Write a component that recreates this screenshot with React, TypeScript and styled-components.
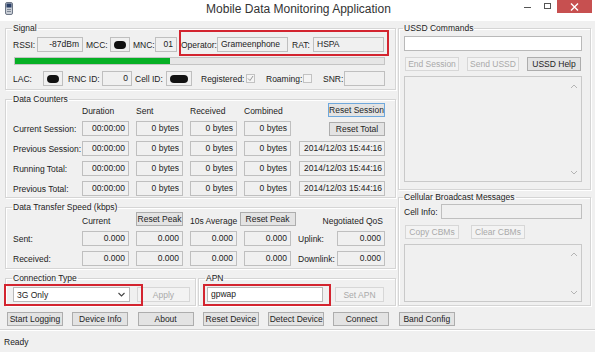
import React from "react";
import styled, { createGlobalStyle } from "styled-components";

const GlobalStyle = createGlobalStyle`
  html, body {
    margin: 0;
    padding: 0;
    background: #fff;
  }
  body {
    font-family: "Liberation Sans", Arial, sans-serif;
    font-size: 8.5px;
    color: #222;
  }
  * {
    box-sizing: border-box;
  }
`;

const signalStrength = 42;

const counterRows = [
  { label: "Current Session:", stamp: null },
  { label: "Previous Session:", stamp: "2014/12/03 15:44:16" },
  { label: "Running Total:", stamp: "2014/12/03 15:44:16" },
  { label: "Previous Total:", stamp: "2014/12/03 15:44:16" },
];

const bottomButtons = [
  "Start Logging",
  "Device Info",
  "About",
  "Reset Device",
  "Detect Device",
  "Connect",
  "Band Config",
];

const Chevron = ({ up }: { up?: boolean }) => (
  <svg width="8" height="5" viewBox="0 0 8 5">
    <polyline
      points={up ? "1,4 4,1 7,4" : "1,1 4,4 7,1"}
      fill="none"
      stroke="#b4b4b4"
      strokeWidth="1"
    />
  </svg>
);

const AppIcon = () => (
  <svg width="8" height="13" viewBox="0 0 8 13">
    <rect x="0.5" y="0.5" width="7" height="12" rx="1.5" fill="#c9ced6" stroke="#6d7786" />
    <rect x="1.5" y="1.5" width="5" height="4" fill="#2a3f66" />
    <rect x="2" y="7" width="4" height="1" fill="#7f8896" />
    <rect x="2" y="9" width="4" height="1" fill="#7f8896" />
  </svg>
);

export default function App() {
  return (
    <>
      <GlobalStyle />
      <Window>
        <TitleBar>
          <IconSlot>
            <AppIcon />
          </IconSlot>
          <Title>Mobile Data Monitoring Application</Title>
          <Controls>
            <MinButton>
              <span />
            </MinButton>
            <MaxButton>
              <span />
            </MaxButton>
            <CloseButton>
              <svg width="9" height="8" viewBox="0 0 9 8">
                <path d="M1 0.5 L8 7.5 M8 0.5 L1 7.5" stroke="#fff" strokeWidth="1.4" />
              </svg>
            </CloseButton>
          </Controls>
        </TitleBar>

        <Body>
          <LeftColumn>
            <Group $h={67} $pt={4}>
              <Legend>Signal</Legend>
              <Row>
                <Label $w={24}>RSSI:</Label>
                <Box $w={46}>-87dBm</Box>
                <Label $w={24} $ml={3}>MCC:</Label>
                <Box $w={20}>
                  <Blob />
                </Box>
                <Label $w={22} $ml={3}>MNC:</Label>
                <Box $w={22}>01</Box>
                <Highlight $t={7} $r={5} $b={4} $l={2} $ml={4}>
                  <Label $w={36}>Operator:</Label>
                  <Box $w={71} $align="left">Grameenphone</Box>
                  <Label $w={21} $ml={4}>RAT:</Label>
                  <Box $w={71} $align="left">HSPA</Box>
                </Highlight>
              </Row>
              <Progress>
                <ProgressFill style={{ width: `${signalStrength}%` }} />
              </Progress>
              <Row>
                <Label $w={30}>LAC:</Label>
                <Box $w={20}>
                  <Blob />
                </Box>
                <Label $w={34} $ml={5}>RNC ID:</Label>
                <Box $w={30}>0</Box>
                <Label $w={31} $ml={3}>Cell ID:</Label>
                <Box $w={26}>
                  <Blob />
                </Box>
                <Label $w={45} $ml={9}>Registered:</Label>
                <Check>
                  <svg width="7" height="7" viewBox="0 0 7 7">
                    <polyline points="1,3.5 3,5.5 6,1" fill="none" stroke="#9a9a9a" strokeWidth="1" />
                  </svg>
                </Check>
                <Label $w={37} $ml={11}>Roaming:</Label>
                <Check />
                <Label $w={21} $ml={11}>SNR:</Label>
                <Box $w={41} />
              </Row>
            </Group>

            <Group $h={104} $pt={0}>
              <Legend>Data Counters</Legend>
              <CounterGrid>
                <span />
                <Header>Duration</Header>
                <Header>Sent</Header>
                <Header>Received</Header>
                <Header>Combined</Header>
                <Button $w={57} $focused $end>
                  Reset Session
                </Button>
                {counterRows.map((row) => (
                  <React.Fragment key={row.label}>
                    <RowLabel>{row.label}</RowLabel>
                    <Box $w={47}>00:00:00</Box>
                    <Box $w={47}>0 bytes</Box>
                    <Box $w={47}>0 bytes</Box>
                    <Box $w={47}>0 bytes</Box>
                    {row.stamp ? (
                      <Stamp $w={86}>{row.stamp}</Stamp>
                    ) : (
                      <Button $w={56} $end>
                        Reset Total
                      </Button>
                    )}
                  </React.Fragment>
                ))}
              </CounterGrid>
            </Group>

            <Group $h={67} $pt={0}>
              <Legend>Data Transfer Speed (kbps)</Legend>
              <SpeedGrid>
                <span />
                <Header>Current</Header>
                <Button $w={47}>Reset Peak</Button>
                <Header>10s Average</Header>
                <Button $w={56} $center>
                  Reset Peak
                </Button>
                <Header $right>Negotiated QoS</Header>
                {[
                  ["Sent:", "Uplink:"],
                  ["Received:", "Downlink:"],
                ].map(([label, qos]) => (
                  <React.Fragment key={label}>
                    <RowLabel>{label}</RowLabel>
                    <Box $w={47}>0.000</Box>
                    <Box $w={47}>0.000</Box>
                    <Box $w={47}>0.000</Box>
                    <Box $w={47}>0.000</Box>
                    <QosCell>
                      <RowLabel>{qos}</RowLabel>
                      <Box $w={48}>0.000</Box>
                    </QosCell>
                  </React.Fragment>
                ))}
              </SpeedGrid>
            </Group>

            <BottomGroups>
              <Group $h={33} $pt={4} $w={191}>
                <Legend>Connection Type</Legend>
                <Row>
                  <Highlight $t={3} $r={13} $b={4} $l={9}>
                    <Select>
                      <span>3G Only</span>
                      <svg width="7" height="5" viewBox="0 0 7 5">
                        <polyline points="0.5,1 3.5,4 6.5,1" fill="none" stroke="#444" strokeWidth="1.1" />
                      </svg>
                    </Select>
                  </Highlight>
                  <Button $w={53} $h={15} $ml={7} disabled>
                    Apply
                  </Button>
                </Row>
              </Group>
              <Group $h={33} $pt={4} $w={198}>
                <Legend>APN</Legend>
                <Row>
                  <Highlight $t={3} $r={8} $b={4} $l={4} $ml={1}>
                    <Input $w={116}>gpwap</Input>
                  </Highlight>
                  <Button $w={49} $h={15} $ml={12} disabled>
                    Set APN
                  </Button>
                </Row>
              </Group>
            </BottomGroups>
          </LeftColumn>

          <RightColumn>
            <Group $h={167} $pt={3} $pl={5} $pr={8}>
              <Legend>USSD Commands</Legend>
              <Input $w={178} />
              <ButtonRow $gap={8} $mt={6}>
                <Button $w={54} disabled>
                  End Session
                </Button>
                <Button $w={52} disabled>
                  Send USSD
                </Button>
                <Button $w={54}>USSD Help</Button>
              </ButtonRow>
              <Pane $h={106} $mt={5}>
                <PaneText />
                <ScrollTrack>
                  <Chevron up />
                  <Chevron />
                </ScrollTrack>
              </Pane>
            </Group>
            <Group $h={114} $pt={2} $pl={5} $pr={8}>
              <Legend>Cellular Broadcast Messages</Legend>
              <Row>
                <Label $w={37}>Cell Info:</Label>
                <Box $w={141} />
              </Row>
              <ButtonRow $gap={12} $mt={6}>
                <Button $w={54} disabled>
                  Copy CBMs
                </Button>
                <Button $w={54} disabled>
                  Clear CBMs
                </Button>
              </ButtonRow>
              <Pane $h={58} $mt={5}>
                <PaneText />
                <ScrollTrack>
                  <Chevron up />
                  <Chevron />
                </ScrollTrack>
              </Pane>
            </Group>
          </RightColumn>
        </Body>

        <ActionBar>
          {bottomButtons.map((b) => (
            <Button key={b} $w={56}>
              {b}
            </Button>
          ))}
        </ActionBar>

        <StatusBar>Ready</StatusBar>
      </Window>
    </>
  );
}

const Window = styled.div`
  width: 595px;
  height: 352px;
  background: #f0f0f0;
  display: flex;
  flex-direction: column;
`;

const TitleBar = styled.div`
  height: 21px;
  flex: none;
  background: #fff;
  display: grid;
  grid-template-columns: 1fr auto 1fr;
  align-items: start;
`;

const IconSlot = styled.div`
  padding: 2px 0 0 5px;
  display: flex;
`;

const Title = styled.div`
  font-size: 12px;
  line-height: 19px;
  color: #333;
  padding-left: 2px;
`;

const Controls = styled.div`
  justify-self: end;
  display: flex;
  margin-right: 3px;
`;

const MinButton = styled.div`
  width: 21px;
  height: 13px;
  display: flex;
  justify-content: center;
  padding-top: 7px;

  span {
    width: 7px;
    height: 1px;
    background: #555;
  }
`;

const MaxButton = styled.div`
  width: 19px;
  height: 13px;
  display: flex;
  justify-content: center;
  padding-top: 3px;

  span {
    width: 7px;
    height: 6px;
    border: 1px solid #555;
  }
`;

const CloseButton = styled.div`
  width: 35px;
  height: 13px;
  background: #c75050;
  display: flex;
  align-items: center;
  justify-content: center;
`;

const Body = styled.div`
  height: 285px;
  display: flex;
  gap: 2px;
  padding: 2px 0 0 5px;
`;

const LeftColumn = styled.div`
  width: 391px;
  display: flex;
  flex-direction: column;
  gap: 4px;
`;

const RightColumn = styled.div`
  width: 193px;
  display: flex;
  flex-direction: column;
  gap: 2px;
`;

const Group = styled.fieldset<{ $h: number; $pt: number; $w?: number; $pl?: number; $pr?: number }>`
  margin: 0;
  min-width: 0;
  width: ${({ $w }) => ($w ? `${$w}px` : "auto")};
  height: ${({ $h }) => $h}px;
  padding: ${({ $pt }) => $pt}px ${({ $pr }) => $pr ?? 8}px 0 ${({ $pl }) => $pl ?? 7}px;
  border: 1px solid #d5d5d5;
  box-shadow: inset 1px 1px 0 #fff, 1px 1px 0 #fff;
`;

const Legend = styled.legend`
  padding: 0 1px;
  margin-left: -1px;
  line-height: 10px;
  color: #222;
`;

const Row = styled.div`
  display: flex;
  align-items: center;
  height: 15px;
`;

const Label = styled.span<{ $w: number; $ml?: number }>`
  flex: none;
  width: ${({ $w }) => $w}px;
  margin-left: ${({ $ml }) => $ml ?? 0}px;
  white-space: nowrap;
`;

const Box = styled.div<{ $w: number; $align?: string }>`
  flex: none;
  width: ${({ $w }) => $w}px;
  height: 15px;
  border: 1px solid #bfbfbf;
  background: #f0f0f0;
  padding: 0 3px;
  line-height: 13px;
  text-align: ${({ $align }) => $align ?? "right"};
  white-space: nowrap;
  overflow: hidden;
  display: flex;
  align-items: center;
  justify-content: ${({ $align }) => ($align === "left" ? "flex-start" : "flex-end")};
`;

const Stamp = styled(Box)`
  justify-self: end;
  padding: 0 2px;
`;

const Blob = styled.span`
  display: block;
  width: 100%;
  height: 8px;
  border-radius: 4px;
  background: #111;
`;

const Highlight = styled.span<{ $t: number; $r: number; $b: number; $l: number; $ml?: number }>`
  position: relative;
  display: flex;
  align-items: center;
  margin-left: ${({ $ml }) => $ml ?? 0}px;

  &::after {
    content: "";
    position: absolute;
    top: -${({ $t }) => $t}px;
    right: -${({ $r }) => $r}px;
    bottom: -${({ $b }) => $b}px;
    left: -${({ $l }) => $l}px;
    border: 2px solid #d3242f;
    pointer-events: none;
  }
`;

const Progress = styled.div`
  width: 371px;
  height: 8px;
  margin: 5px 0 6px 1px;
  background: #e6e6e6;
  border: 1px solid #c4c4c4;
`;

const ProgressFill = styled.div`
  height: 100%;
  background: #06b025;
`;

const Check = styled.span`
  flex: none;
  width: 9px;
  height: 9px;
  border: 1px solid #c2c2c2;
  background: #f4f4f4;
  display: flex;
  align-items: center;
  justify-content: center;
`;

const CounterGrid = styled.div`
  display: grid;
  grid-template-columns: 62px repeat(4, 47px) 87px;
  grid-template-rows: 13px repeat(4, 15px);
  column-gap: 7px;
  row-gap: 5px;
  align-items: center;
  margin-top: -1px;
`;

const SpeedGrid = styled.div`
  display: grid;
  grid-template-columns: 62px repeat(4, 47px) 87px;
  grid-template-rows: 14px 15px 15px;
  column-gap: 7px;
  row-gap: 5px;
  align-items: center;
`;

const Header = styled.span<{ $right?: boolean }>`
  align-self: end;
  line-height: 9px;
  white-space: nowrap;
  justify-self: ${({ $right }) => ($right ? "end" : "start")};
  margin-right: ${({ $right }) => ($right ? "2px" : "0")};
`;

const RowLabel = styled.span`
  white-space: nowrap;
`;

const QosCell = styled.div`
  display: flex;
  align-items: center;
  justify-content: space-between;
`;

const Button = styled.button<{
  $w: number;
  $h?: number;
  $ml?: number;
  $focused?: boolean;
  $end?: boolean;
  $center?: boolean;
}>`
  flex: none;
  width: ${({ $w }) => $w}px;
  height: ${({ $h }) => $h ?? 14}px;
  margin: 0 0 0 ${({ $ml }) => $ml ?? 0}px;
  padding: 0;
  font-family: inherit;
  font-size: 8.5px;
  line-height: 12px;
  white-space: nowrap;
  overflow: visible;
  justify-self: ${({ $end, $center }) => ($end ? "end" : $center ? "center" : "start")};
  border: 1px solid ${({ $focused }) => ($focused ? "#6fa8dc" : "#adadad")};
  background: #e3e3e3;
  color: #1e1e1e;

  &:disabled {
    border-color: #d7d7d7;
    background: #f3f3f3;
    color: #a9a9a9;
  }
`;

const BottomGroups = styled.div`
  display: flex;
  gap: 2px;
`;

const Select = styled.div`
  width: 117px;
  height: 15px;
  border: 1px solid #b9b9b9;
  background: #fff;
  display: flex;
  align-items: center;
  justify-content: space-between;
  padding: 0 4px 0 3px;
`;

const Input = styled.div<{ $w: number }>`
  width: ${({ $w }) => $w}px;
  height: 15px;
  border: 1px solid #b9b9b9;
  background: #fff;
  padding: 0 3px;
  line-height: 13px;
`;

const ButtonRow = styled.div<{ $gap: number; $mt: number }>`
  display: flex;
  gap: ${({ $gap }) => $gap}px;
  margin-top: ${({ $mt }) => $mt}px;
  padding-left: 1px;
`;

const Pane = styled.div<{ $h: number; $mt: number }>`
  height: ${({ $h }) => $h}px;
  margin-top: ${({ $mt }) => $mt}px;
  border: 1px solid #c9c9c9;
  background: #f0f0f0;
  display: flex;
`;

const PaneText = styled.div`
  flex: 1;
`;

const ScrollTrack = styled.div`
  width: 15px;
  display: flex;
  flex-direction: column;
  justify-content: space-between;
  align-items: center;
  padding: 7px 0 6px;
`;

const ActionBar = styled.div`
  display: flex;
  gap: 9.3px;
  padding: 6px 0 0 7px;
`;

const StatusBar = styled.div`
  margin-top: 3px;
  flex: 1;
  border-top: 1px solid #d2d2d2;
  box-shadow: inset 0 1px 0 #fff;
  padding: 7px 0 0 4px;
  line-height: 10px;
`;
